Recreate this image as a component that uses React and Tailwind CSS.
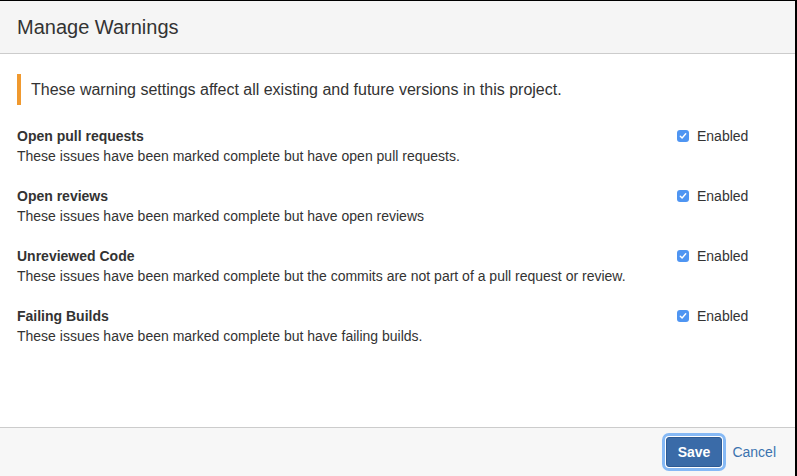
import React from "react";

const rows = [
  { t: "Open pull requests", d: "These issues have been marked complete but have open pull requests." },
  { t: "Open reviews", d: "These issues have been marked complete but have open reviews" },
  { t: "Unreviewed Code", d: "These issues have been marked complete but the commits are not part of a pull request or review." },
  { t: "Failing Builds", d: "These issues have been marked complete but have failing builds." },
];

function Check() {
  return (
    <span className="w-[12px] h-[12px] rounded-[3px] bg-[#4f95f2] flex items-center justify-center">
      <svg width="8" height="8" viewBox="0 0 8 8" fill="none">
        <path d="M1.3 4.2 L3.1 6 L6.7 1.8" stroke="white" strokeWidth="1.4" strokeLinecap="round" strokeLinejoin="round" />
      </svg>
    </span>
  );
}

export default function App() {
  return (
    <div
      className="w-[797px] h-[476px] bg-white border-t border-r-2 border-black flex flex-col text-[#333]"
      style={{ fontFamily: '"Liberation Sans", Arial, Helvetica, sans-serif' }}
    >
      <div className="h-[53px] shrink-0 bg-[#f5f5f5] border-b border-[#cccccc] px-[17px] flex items-center text-[20px]">
        Manage Warnings
      </div>
      <div className="flex-1 px-[17px] pt-[20px]">
        <div className="border-l-4 border-[#f0992f] pl-[10px] h-[31px] flex items-center text-[16px]">
          These warning settings affect all existing and future versions in this project.
        </div>
        <div className="mt-[21px] flex flex-col gap-[20px]">
          {rows.map((r) => (
            <div key={r.t} className="grid grid-cols-[1fr_101px] text-[14px] leading-[20px]">
              <div>
                <div className="font-bold">{r.t}</div>
                <div>{r.d}</div>
              </div>
              <div className="flex items-center gap-[8px] h-[20px]">
                <Check />
                <span>Enabled</span>
              </div>
            </div>
          ))}
        </div>
      </div>
      <div className="h-[49px] shrink-0 bg-[#f7f7f7] border-t border-[#cccccc] flex items-center justify-end pr-[19px] gap-[10px] text-[14px]">
        <button className="h-[30px] px-[11px] rounded-[3px] bg-[#3a6ba8] border border-[#2d5a94] text-white font-bold shadow-[0_0_0_1px_#ffffff,0_0_0_4px_#86b9f5]">
          Save
        </button>
        <span className="text-[#3b73af]">Cancel</span>
      </div>
    </div>
  );
}
